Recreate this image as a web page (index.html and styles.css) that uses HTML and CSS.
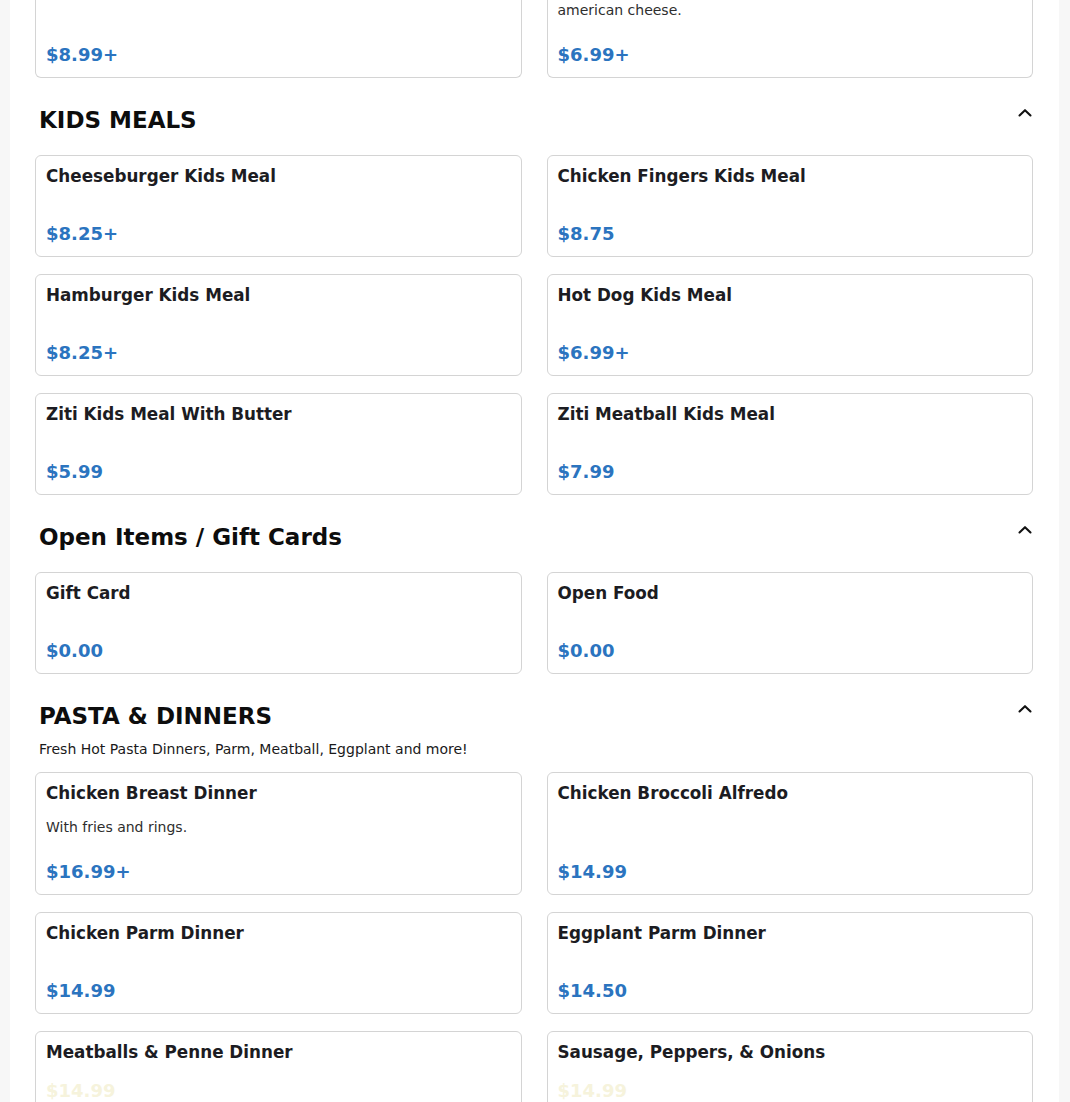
FILE: index.html
```html
<!DOCTYPE html>
<html lang="en">
<head>
<meta charset="utf-8">
<title>Menu</title>
<link rel="stylesheet" href="styles.css">
</head>
<body>
<main class="menu">
  <div class="grid">
    <div class="card clipped">
      <div class="price">$8.99+</div>
    </div>
    <div class="card clipped">
      <div class="desc">american cheese.</div>
      <div class="price">$6.99+</div>
    </div>
  </div>

  <section class="section">
    <div class="section-head">
      <h2 class="section-title">KIDS MEALS</h2>
      <svg class="chev" width="16" height="16" viewBox="0 0 16 16"><polyline points="2.5,10.5 8,5.2 13.5,10.5" fill="none" stroke="#111" stroke-width="2.1" stroke-linecap="round" stroke-linejoin="round"/></svg>
    </div>
    <div class="grid">
      <div class="card"><div class="title">Cheeseburger Kids Meal</div><div class="price">$8.25+</div></div>
      <div class="card"><div class="title">Chicken Fingers Kids Meal</div><div class="price">$8.75</div></div>
      <div class="card"><div class="title">Hamburger Kids Meal</div><div class="price">$8.25+</div></div>
      <div class="card"><div class="title">Hot Dog Kids Meal</div><div class="price">$6.99+</div></div>
      <div class="card"><div class="title">Ziti Kids Meal With Butter</div><div class="price">$5.99</div></div>
      <div class="card"><div class="title">Ziti Meatball Kids Meal</div><div class="price">$7.99</div></div>
    </div>
  </section>

  <section class="section">
    <div class="section-head">
      <h2 class="section-title">Open Items / Gift Cards</h2>
      <svg class="chev" width="16" height="16" viewBox="0 0 16 16"><polyline points="2.5,10.5 8,5.2 13.5,10.5" fill="none" stroke="#111" stroke-width="2.1" stroke-linecap="round" stroke-linejoin="round"/></svg>
    </div>
    <div class="grid">
      <div class="card"><div class="title">Gift Card</div><div class="price">$0.00</div></div>
      <div class="card"><div class="title">Open Food</div><div class="price">$0.00</div></div>
    </div>
  </section>

  <section class="section">
    <div class="section-head has-sub">
      <h2 class="section-title">PASTA &amp; DINNERS</h2>
      <svg class="chev" width="16" height="16" viewBox="0 0 16 16"><polyline points="2.5,10.5 8,5.2 13.5,10.5" fill="none" stroke="#111" stroke-width="2.1" stroke-linecap="round" stroke-linejoin="round"/></svg>
    </div>
    <p class="section-sub">Fresh Hot Pasta Dinners, Parm, Meatball, Eggplant and more!</p>
    <div class="grid">
      <div class="card"><div class="title">Chicken Breast Dinner</div><div class="desc">With fries and rings.</div><div class="price">$16.99+</div></div>
      <div class="card"><div class="title">Chicken Broccoli Alfredo</div><div class="price">$14.99</div></div>
      <div class="card"><div class="title">Chicken Parm Dinner</div><div class="price">$14.99</div></div>
      <div class="card"><div class="title">Eggplant Parm Dinner</div><div class="price">$14.50</div></div>
      <div class="card"><div class="title">Meatballs &amp; Penne Dinner</div><div class="price faint">$14.99</div></div>
      <div class="card"><div class="title">Sausage, Peppers, &amp; Onions</div><div class="price faint">$14.99</div></div>
    </div>
  </section>
</main>
</body>
</html>
```

FILE: styles.css
```css
html, body {
  margin: 0;
  padding: 0;
}
body {
  background: #f7f7f7;
  font-family: "DejaVu Sans", "Liberation Sans", sans-serif;
  color: #1c1c1c;
}
.menu {
  margin: 0 11px 0 10px;
  background: #ffffff;
  padding: 0 26px 40px 25px;
  min-height: 1102px;
  box-sizing: border-box;
}
.grid {
  display: grid;
  grid-template-columns: 1fr 1fr;
  column-gap: 25px;
  row-gap: 17px;
}
.card {
  display: flex;
  flex-direction: column;
  min-height: 102px;
  box-sizing: border-box;
  border: 1px solid #d4d4d4;
  border-radius: 6px;
  padding: 10px 10px 10px 10px;
  background: #fff;
}
.card.clipped {
  min-height: 0;
  height: 78px;
  border-top: none;
  border-top-left-radius: 0;
  border-top-right-radius: 0;
  padding-top: 0;
}
.title {
  font-size: 16.8px;
  font-weight: bold;
  line-height: 21px;
  color: #1c1c22;
}
.desc {
  font-size: 14px;
  line-height: 21px;
  color: #2e2e2e;
  margin-top: 13px;
  margin-bottom: 22px;
}
.clipped .desc {
  margin-top: 0;
}
.price {
  margin-top: auto;
  font-size: 18px;
  font-weight: bold;
  line-height: 24px;
  color: #2b74bf;
}
.price.faint {
  color: #f6f3dc;
  transform: translateY(-19px);
}
.section-head {
  display: flex;
  justify-content: space-between;
  align-items: flex-start;
  margin-top: 28px;
  margin-bottom: 21px;
  padding-left: 4px;
}
.section-head.has-sub {
  margin-bottom: 0;
}
.section-title {
  margin: 0;
  font-size: 23px;
  line-height: 28px;
  font-weight: bold;
  color: #0d0d0d;
}
.chev {
  display: block;
  margin-top: -1px;
}
.section-sub {
  margin: 9px 0 12px 0;
  padding-left: 4px;
  font-size: 14px;
  line-height: 21px;
  color: #1a1a1a;
}
```
